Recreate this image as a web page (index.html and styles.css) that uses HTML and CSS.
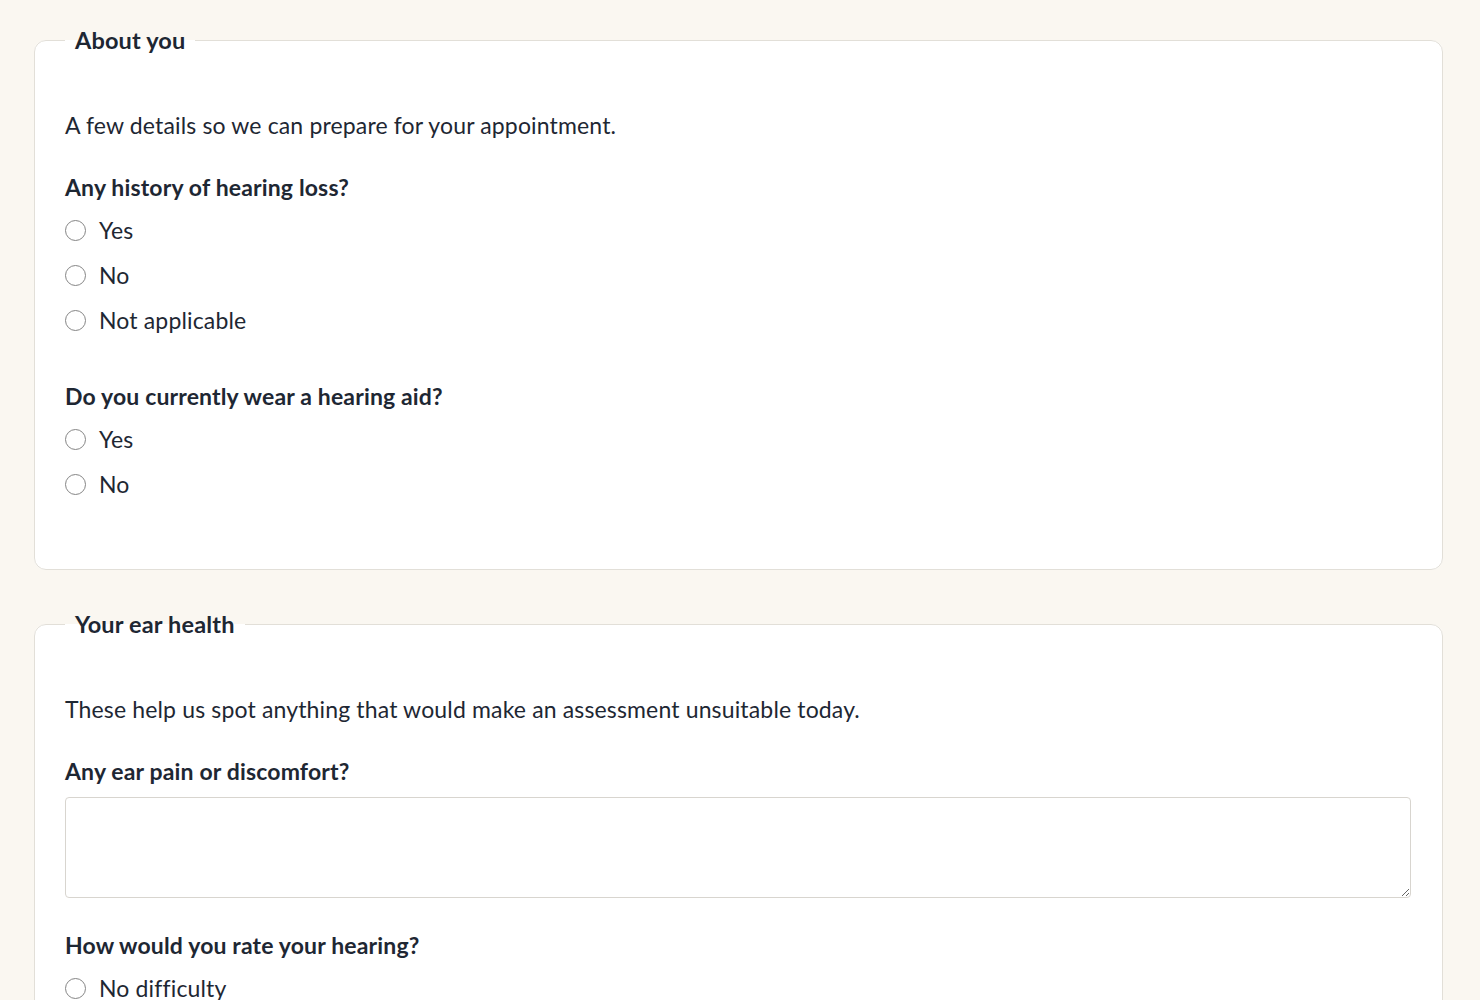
FILE: index.html
```html
<!DOCTYPE html>
<html lang="en">
<head>
<meta charset="utf-8">
<title>Hearing assessment</title>
<link rel="stylesheet" href="styles.css">
</head>
<body>
<main class="page">
  <form class="form">
    <fieldset class="section">
      <legend class="section-title">About you</legend>
      <p class="section-desc">A few details so we can prepare for your appointment.</p>
      <div class="question">
        <p class="q-label">Any history of hearing loss?</p>
        <label class="option"><input type="radio" name="loss" class="radio"><span>Yes</span></label>
        <label class="option"><input type="radio" name="loss" class="radio"><span>No</span></label>
        <label class="option"><input type="radio" name="loss" class="radio"><span>Not applicable</span></label>
      </div>
      <div class="question">
        <p class="q-label">Do you currently wear a hearing aid?</p>
        <label class="option"><input type="radio" name="aid" class="radio"><span>Yes</span></label>
        <label class="option"><input type="radio" name="aid" class="radio"><span>No</span></label>
      </div>
    </fieldset>

    <fieldset class="section">
      <legend class="section-title">Your ear health</legend>
      <p class="section-desc">These help us spot anything that would make an assessment unsuitable today.</p>
      <div class="question">
        <label class="q-label" for="pain">Any ear pain or discomfort?</label>
        <textarea id="pain" class="textarea"></textarea>
      </div>
      <div class="question question-after-text">
        <p class="q-label">How would you rate your hearing?</p>
        <label class="option"><input type="radio" name="rate" class="radio"><span>No difficulty</span></label>
      </div>
    </fieldset>
  </form>
</main>
</body>
</html>
```

FILE: styles.css
```css
* { box-sizing: border-box; }

html, body {
  margin: 0;
  background: #faf7f1;
}

body {
  font-family: Lato, "Source Sans 3", "Open Sans", sans-serif;
  font-size: 23px;
  letter-spacing: 0.15px;
  line-height: 33px;
  color: #1e2733;
}

.page {
  padding: 25px 37px 40px 34px;
}

.form {
  display: flex;
  flex-direction: column;
  gap: 39px;
}

.section {
  margin: 0;
  background: #ffffff;
  border: 1px solid #e2dfd8;
  border-radius: 12px;
  padding: 54px 31px 62px 30px;
  min-width: 0;
}

.section-title {
  padding: 0 10px;
  font-weight: 700;
  font-size: 23.5px;
  line-height: 30px;
  color: #1e2733;
}

.section-desc {
  margin: 0 0 29px;
}

.question {
  display: flex;
  flex-direction: column;
  align-items: flex-start;
}

.question + .question {
  margin-top: 37px;
}

.question-after-text.question {
  margin-top: 31px;
}

.q-label {
  margin: 0 0 4px;
  font-weight: 700;
  display: block;
}

.option {
  display: flex;
  align-items: center;
  gap: 13px;
  height: 45px;
  cursor: pointer;
}

.radio {
  appearance: none;
  -webkit-appearance: none;
  margin: 0;
  width: 21px;
  height: 21px;
  border: 1.5px solid #858585;
  border-radius: 50%;
  background: #fff;
  flex: none;
}

.textarea {
  margin-top: 5px;
  width: 100%;
  height: 101px;
  border: 1px solid #d8d5cf;
  border-radius: 4px;
  background: #fff;
  font: inherit;
  resize: vertical;
}
```
